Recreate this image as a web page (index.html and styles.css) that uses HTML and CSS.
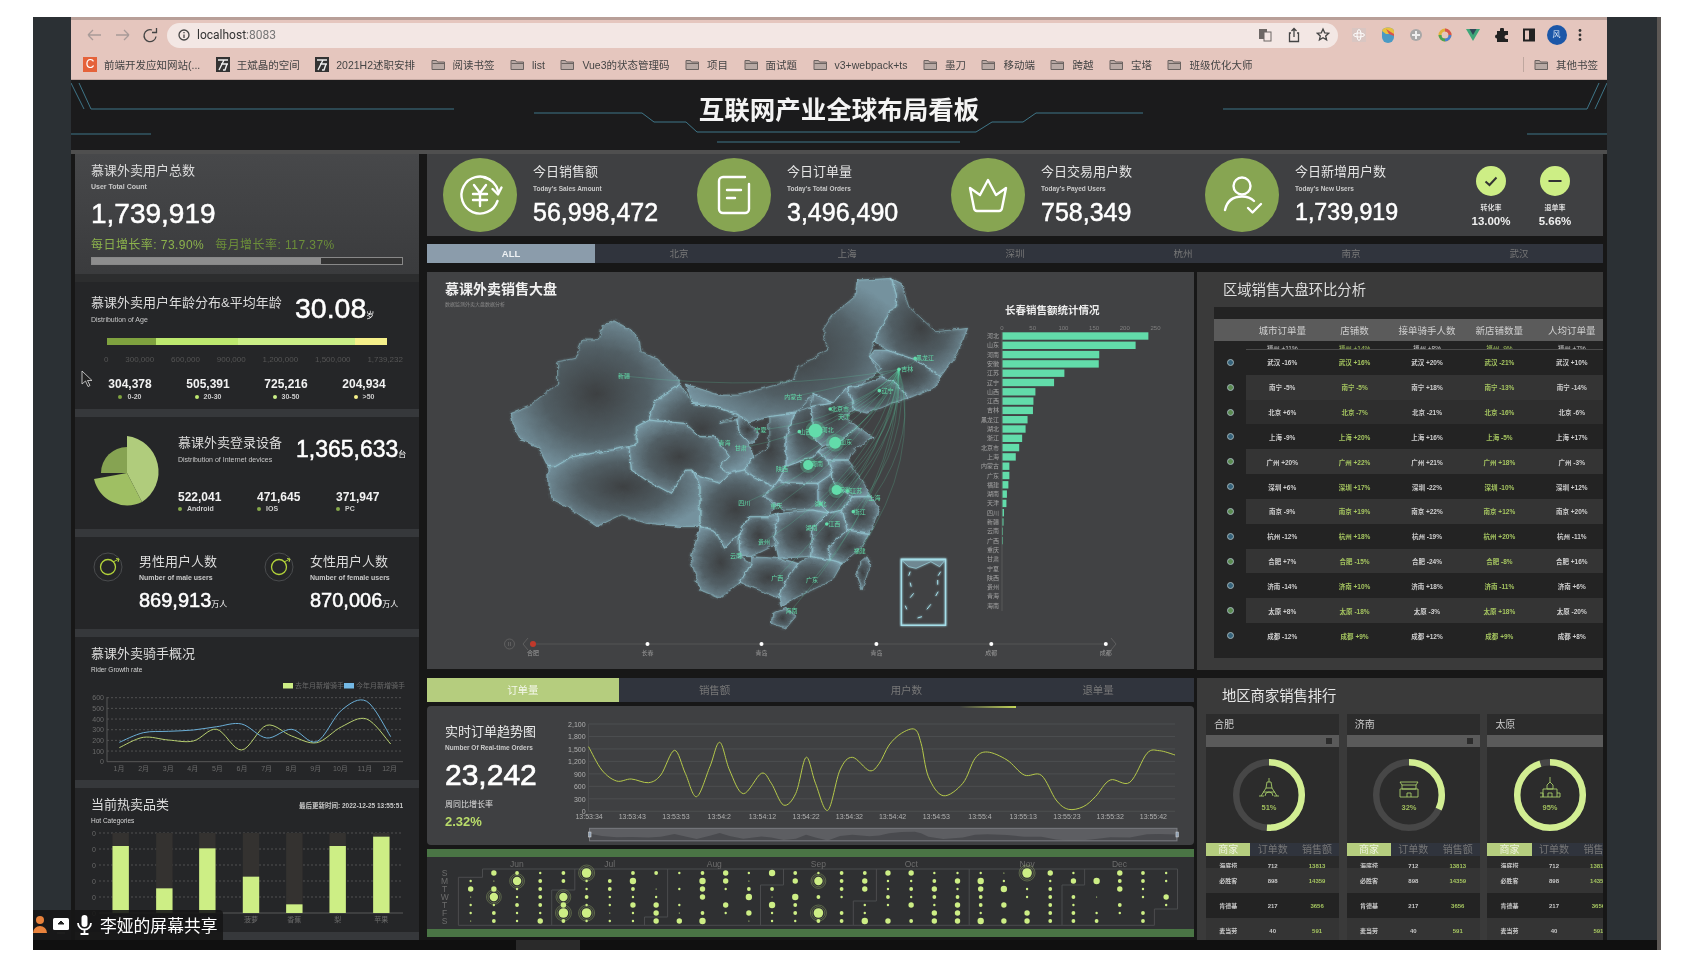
FILE: index.html
```html
<!DOCTYPE html>
<html lang="zh">
<head>
<meta charset="utf-8">
<title>互联网产业全球布局看板</title>
<link rel="stylesheet" href="styles.css">
</head>
<body>
<svg class="defs" width="0" height="0">
  <defs>
    <g id="folder"><path d="M1 3.500h4.500l1 1.500h7v7.500h-12.500z" fill="#b8a9a4" stroke="#6b6360"/><path d="M1.500 6.500h12" stroke="#6b6360"/></g>
    <radialGradient id="prov" cx=".5" cy=".5" r=".56"><stop offset="0" stop-color="#3d4042"/><stop offset=".55" stop-color="#515e64"/><stop offset="1" stop-color="#75929e"/></radialGradient>
    <filter id="rough" filterUnits="userSpaceOnUse" x="100" y="0" width="1100" height="1150" color-interpolation-filters="sRGB"><feTurbulence type="fractalNoise" baseFrequency=".05" numOctaves="3" seed="7" result="n"/><feDisplacementMap in="SourceGraphic" in2="n" scale="10" xChannelSelector="R" yChannelSelector="G"/></filter>
    <filter id="glow" x="-5%" y="-5%" width="110%" height="110%" color-interpolation-filters="sRGB"><feGaussianBlur stdDeviation="2.500" result="b"/><feMerge><feMergeNode in="b"/><feMergeNode in="SourceGraphic"/></feMerge></filter>
  </defs>
</svg>
<div class="frame">
  <div class="app">
    <header class="chrome">
      <div class="toolbar">
        <svg class="nav" width="86" height="24" viewBox="0 0 86 24"><path class="nav-dim" d="M5 12h13M5 12l5-5M5 12l5 5M33 12h13M46 12l-5-5M46 12l-5 5"/><path class="nav-on" d="M69 7a6 6 0 1 0 4 6.500M73.500 5v4.500h-4.500"/></svg>
        <div class="omni">
          <svg width="12" height="12" viewBox="0 0 12 12"><circle cx="6" cy="6" r="5" class="nav-on"/><path d="M6 5.500v3.500M6 3v1.200" class="nav-on"/></svg>
          <span class="url">localhost<em>:8083</em></span>
          <div class="omni-ico">
            <svg width="14" height="16" viewBox="0 0 14 16"><rect x="1" y="2" width="8" height="10" fill="#6d6765"/><rect x="6" y="5" width="7" height="9" fill="#f3e7e4" stroke="#6d6765"/></svg>
            <svg width="14" height="16" viewBox="0 0 14 16"><path class="nav-on" d="M4 6H2.500v8.500h9V6H10M7 10V1.500M4.500 4L7 1.500 9.500 4"/></svg>
            <svg width="14" height="16" viewBox="0 0 14 16"><path class="nav-on" d="M7 2l1.700 3.800 4 .4-3 2.700.9 4-3.600-2.100-3.600 2.100.9-4-3-2.700 4-.4z"/></svg>
          </div>
        </div>
        <div class="ext">
          <svg width="14" height="14" viewBox="0 0 14 14"><rect width="14" height="14" fill="#d9c6c2"/><ellipse cx="7" cy="7" rx="5.500" ry="2" fill="none" stroke="#fff"/><ellipse cx="7" cy="7" rx="2" ry="5.500" fill="none" stroke="#fff"/></svg>
          <svg width="14" height="16" viewBox="0 0 14 16"><path d="M1 4a6 3.500 0 0 1 12 0v6a6 6 0 0 1-12 0z" fill="#4a9ac4"/><path d="M1 4a6 3.500 0 0 1 12 0v3H5z" fill="#e8c23e"/><path d="M5 2l8 5v2l-5-2z" fill="#d9534f"/></svg>
          <svg width="14" height="14" viewBox="0 0 14 14"><circle cx="7" cy="7" r="6" fill="#a8a8a8"/><path d="M3 7h8M7 3v8" stroke="#eee" stroke-width="2"/></svg>
          <svg width="14" height="14" viewBox="0 0 14 14"><circle cx="7" cy="7" r="5" fill="none" stroke="#e2b33a" stroke-width="3"/><path d="M7 2a5 5 0 0 1 5 5" fill="none" stroke="#d9534f" stroke-width="3"/><path d="M7 12a5 5 0 0 1-5-5" fill="none" stroke="#4aa356" stroke-width="3"/><path d="M12 7a5 5 0 0 1-5 5" fill="none" stroke="#4a7fd1" stroke-width="3"/></svg>
          <svg width="14" height="14" viewBox="0 0 14 14"><path d="M0 1h14L7 13z" fill="#3fa77a"/><path d="M3.500 1h7L7 7z" fill="#2f4858"/></svg>
          <svg width="14" height="14" viewBox="0 0 14 14"><path d="M5 1.500a2 2 0 0 1 4 0V3h4v4h-1.500a2 2 0 0 0 0 4H13v3H2v-3.500a2 2 0 0 1 0-4V3h3z" fill="#222"/></svg>
          <svg width="12" height="14" viewBox="0 0 12 14"><rect x="1" y="1.500" width="10" height="11" fill="none" stroke="#222" stroke-width="2"/><rect x="6" y="2" width="4" height="10" fill="#222"/></svg>
          <span class="avatar">风</span>
          <svg width="4" height="14" viewBox="0 0 4 14"><circle cx="2" cy="2.500" r="1.400" fill="#333"/><circle cx="2" cy="7" r="1.400" fill="#333"/><circle cx="2" cy="11.500" r="1.400" fill="#333"/></svg>
        </div>
      </div>
      <nav class="marks">
        <span class="mark"><i class="c-ico">C</i>前端开发应知网站(...</span>
        <span class="mark"><svg width="14" height="15" viewBox="0 0 14 15"><rect width="14" height="15" fill="#333"/><path d="M2 3h10M8 3L3 13M5 7h7M11 7l-2 6H7" stroke="#eee" stroke-width="1.400" fill="none"/></svg>王斌晶的空间</span>
        <span class="mark"><svg width="14" height="15" viewBox="0 0 14 15"><rect width="14" height="15" fill="#333"/><path d="M2 3h10M8 3L3 13M5 7h7M11 7l-2 6H7" stroke="#eee" stroke-width="1.400" fill="none"/></svg>2021H2述职安排</span>
        <span class="mark"><svg width="15" height="15"><use href="#folder"/></svg>阅读书签</span>
        <span class="mark"><svg width="15" height="15"><use href="#folder"/></svg>list</span>
        <span class="mark"><svg width="15" height="15"><use href="#folder"/></svg>Vue3的状态管理码</span>
        <span class="mark"><svg width="15" height="15"><use href="#folder"/></svg>项目</span>
        <span class="mark"><svg width="15" height="15"><use href="#folder"/></svg>面试题</span>
        <span class="mark"><svg width="15" height="15"><use href="#folder"/></svg>v3+webpack+ts</span>
        <span class="mark"><svg width="15" height="15"><use href="#folder"/></svg>墨刀</span>
        <span class="mark"><svg width="15" height="15"><use href="#folder"/></svg>移动端</span>
        <span class="mark"><svg width="15" height="15"><use href="#folder"/></svg>跨越</span>
        <span class="mark"><svg width="15" height="15"><use href="#folder"/></svg>宝塔</span>
        <span class="mark"><svg width="15" height="15"><use href="#folder"/></svg>班级优化大师</span>
        <span class="mark mark-end"><svg width="15" height="15"><use href="#folder"/></svg>其他书签</span>
      </nav>
    </header>

    <div class="banner">
      <svg class="banner-lines" width="1536" height="70" viewBox="71 80 1536 70">
        <path d="M71 83L84 109M79 83L91 109H454M71 134H151M534 113H642L654 122H686L697 132H976L992 122H1023L1036 113H1143M717 142H960M1223 109H1587L1599 83M1595 109L1607 83M1527 134H1607"/>
      </svg>
      <h1>互联网产业全球布局看板</h1>
    </div>

    <main class="board">
      <aside class="left">
        <section class="panel p1">
          <h3>慕课外卖用户总数</h3>
          <p class="en">User Total Count</p>
          <div class="big">1,739,919</div>
          <div class="rates"><span>每日增长率: 73.90%</span><span class="dim">每月增长率: 117.37%</span></div>
          <div class="progress"><div class="progress-fill"></div></div>
        </section>
        <section class="panel p2">
          <div class="head">
            <div class="head-l"><h3>慕课外卖用户年龄分布&amp;平均年龄</h3><p class="en2">Distribution of Age</p></div>
            <div class="num28">30.08<small>岁</small></div>
          </div>
          <div class="agebar"><i class="a1"></i><i class="a2"></i><i class="a3"></i><i class="a4"></i></div>
          <div class="axis"><span>0</span><span>300,000</span><span>600,000</span><span>900,000</span><span>1,200,000</span><span>1,500,000</span><span>1,739,232</span></div>
          <div class="agestats">
            <div><b>304,378</b><p><i class="dot a1"></i>0-20</p></div>
            <div><b>505,391</b><p><i class="dot a2"></i>20-30</p></div>
            <div><b>725,216</b><p><i class="dot a3"></i>30-50</p></div>
            <div><b>204,934</b><p><i class="dot a4"></i>&gt;50</p></div>
          </div>
        </section>
        <section class="panel p3">
          <svg class="pie" width="103" height="112" viewBox="0 0 103 112">
            <path d="M52 19V56L67 85A36 36 0 0 0 52 19Z" fill="#b0cc7c"/>
            <path d="M52 56L67 85A34 34 0 0 1 19 62Z" fill="#9fbf63"/>
            <path d="M52 56V30A26 26 0 0 0 26 56Z" fill="#86a352"/>
          </svg>
          <div class="p3-body">
            <div class="head">
              <div class="head-d"><h3>慕课外卖登录设备</h3><p class="en2">Distribution of Internet devices</p></div>
              <div class="num23">1,365,633<small>台</small></div>
            </div>
            <div class="devstats">
              <div><b>522,041</b><p><i class="dot g"></i>Android</p></div>
              <div><b>471,645</b><p><i class="dot g"></i>IOS</p></div>
              <div><b>371,947</b><p><i class="dot g"></i>PC</p></div>
            </div>
          </div>
        </section>
        <section class="panel p4">
          <div class="gender">
            <svg class="ring" width="34" height="34" viewBox="0 0 34 34"><circle cx="17" cy="17" r="14" fill="none" stroke="#4a4c4e"/><circle cx="17" cy="17" r="7.500" fill="none" stroke="#b3d33a" stroke-width="1.300"/><path d="M22 12l6-3M25 8.500l3 .5-1 3" fill="none" stroke="#b3d33a"/></svg>
            <div><h3>男性用户人数</h3><p class="en3">Number of male users</p><div class="num20">869,913<small>万人</small></div></div>
          </div>
          <div class="gender">
            <svg class="ring" width="34" height="34" viewBox="0 0 34 34"><circle cx="17" cy="17" r="14" fill="none" stroke="#4a4c4e"/><circle cx="17" cy="17" r="7.500" fill="none" stroke="#b3d33a" stroke-width="1.300"/><path d="M22 12l6-3M25 8.500l3 .5-1 3" fill="none" stroke="#b3d33a"/></svg>
            <div><h3>女性用户人数</h3><p class="en3">Number of female users</p><div class="num20">870,006<small>万人</small></div></div>
          </div>
        </section>
        <section class="panel p5">
          <h3>慕课外卖骑手概况</h3>
          <p class="en3 thin">Rider Growth rate</p>
          <svg id="rider" class="flowsvg" width="344" height="103"></svg>
        </section>
        <section class="panel p6">
          <div class="title-row"><h3>当前热卖品类</h3><span class="updated">最后更新时间: 2022-12-25 13:55:51</span></div>
          <p class="en3 thin">Hot Categories</p>
          <svg id="hot" class="flowsvg" width="344" height="104"></svg>
        </section>
      </aside>

      <section class="stats">
        <div class="stat">
          <svg class="disc" width="74" height="74" viewBox="0 0 74 74"><path class="ico" d="M54.500 43A18.500 18.500 0 1 1 47 21.500M41 19.500A18 18 0 0 1 55 33M49.500 31L55 36.500L58.500 29.500M31 27L37 35L43 27M30 36H44M30 42H44M37 35V48"/></svg>
          <div class="stat-t"><h3>今日销售额</h3><p class="en">Today's Sales Amount</p><div class="num25">56,998,472</div></div>
        </div>
        <div class="stat">
          <svg class="disc" width="74" height="74" viewBox="0 0 74 74"><path class="ico" d="M48 19H26a4 4 0 0 0-4 4V51a4 4 0 0 0 4 4H48a4 4 0 0 0 4-4V26M30 32H44M30 40H38"/></svg>
          <div class="stat-t"><h3>今日订单量</h3><p class="en">Today's Total Orders</p><div class="num25">3,496,490</div></div>
        </div>
        <div class="stat">
          <svg class="disc" width="74" height="74" viewBox="0 0 74 74"><path class="ico" d="M19 30L29 37L37 22L45 37L55 30L51 50a3 3 0 0 1-3 3H26a3 3 0 0 1-3-3Z"/></svg>
          <div class="stat-t"><h3>今日交易用户数</h3><p class="en">Today's Payed Users</p><div class="num25">758,349</div></div>
        </div>
        <div class="stat">
          <svg class="disc" width="74" height="74" viewBox="0 0 74 74"><circle class="ico" cx="37" cy="28" r="8.500"/><path class="ico" d="M20 52C22 43 28 38.500 37 38.500C42 38.500 46 40 49 43M43 50L47.500 54.500L56 46"/></svg>
          <div class="stat-t"><h3>今日新增用户数</h3><p class="en">Today's New Users</p><div class="num25 fit">1,739,919</div></div>
        </div>
        <div class="rate">
          <svg width="30" height="30" viewBox="0 0 30 30"><circle cx="15" cy="15" r="15" fill="#cdee85"/><path d="M9.500 15.500L13.500 19L20.500 11.500" fill="none" stroke="#333" stroke-width="2"/></svg>
          <p>转化率</p><b>13.00%</b>
        </div>
        <div class="rate">
          <svg width="30" height="30" viewBox="0 0 30 30"><circle cx="15" cy="15" r="15" fill="#cdee85"/><path d="M8.500 15H21.500" stroke="#333" stroke-width="2"/></svg>
          <p>退单率</p><b>5.66%</b>
        </div>
      </section>

      <nav class="citytabs">
        <a class="on">ALL</a><a>北京</a><a>上海</a><a>深圳</a><a>杭州</a><a>南京</a><a>武汉</a>
      </nav>

      <section class="mapbox">
        <h2>慕课外卖销售大盘</h2>
        <p class="map-sub">数据监测外卖大盘数据分析</p>
        <svg id="map" class="mapsvg" width="767" height="398" viewBox="0 0 767 398">
          <svg x="-2" y="-2" width="770" height="410" viewBox="0 0 1568 1230" preserveAspectRatio="none">
            <defs>
              <g id="provinces">
                <polygon points="385,152 420,180 437,215 440,245 470,265 510,320 520,342 470,390 455,450 430,470 430,525 415,530 380,540 300,560 265,590 250,590 230,530 195,510 180,470 175,430 210,410 270,340 270,275 305,265 320,210 355,210 360,170"/>
                <polygon points="250,590 265,590 300,560 380,540 415,530 420,600 450,630 500,670 530,600 545,600 560,650 560,770 520,770 450,760 400,735 350,770 300,720 260,690 250,650"/>
                <polygon points="430,470 455,450 530,460 560,500 590,500 620,560 600,590 620,610 600,640 560,620 545,600 530,600 500,670 450,630 420,600 415,530 430,525"/>
                <polygon points="520,342 545,400 590,410 640,435 600,460 635,450 640,490 660,520 670,560 650,600 620,610 600,590 620,560 590,500 560,500 530,460 455,450 470,390"/>
                <polygon points="530,342 600,375 640,375 750,330 760,290 820,240 810,180 830,135 875,80 880,30 950,25 960,75 960,100 930,165 915,215 905,260 930,295 890,345 860,350 830,400 790,370 785,410 750,430 700,440 660,460 640,435 590,410 545,400"/>
                <polygon points="950,25 970,40 985,110 1040,185 1105,175 1085,250 1050,320 1000,270 940,240 915,215 930,165 960,100 960,75"/>
                <polygon points="915,240 940,240 1000,270 1050,320 1040,350 985,385 960,340 930,320 905,260"/>
                <polygon points="890,345 930,320 960,340 985,385 950,400 900,430 875,420 860,350"/>
                <polygon points="830,400 860,350 875,420 850,440 880,470 850,510 810,530 790,500 790,440 785,410"/>
                <polygon points="790,370 830,400 785,410 790,440 790,500 810,530 790,560 735,590 735,500 755,430"/>
                <polygon points="700,440 750,430 755,430 735,500 735,590 720,630 710,650 670,620 650,600 670,560 700,530"/>
                <polygon points="640,435 660,460 680,490 670,520 660,520 640,490 635,450"/>
                <polygon points="850,510 880,470 915,500 880,530 860,570 820,570 800,545"/>
                <polygon points="735,590 790,560 810,530 800,545 820,570 830,610 800,640 740,640 720,630"/>
                <polygon points="860,570 885,620 910,680 870,680 830,640 830,610 820,570"/>
                <polygon points="830,610 830,640 870,680 850,720 820,730 800,690 800,640"/>
                <polygon points="870,680 910,680 925,720 905,790 860,780 850,720"/>
                <polygon points="860,780 905,790 890,830 850,880 825,870 820,830"/>
                <polygon points="850,720 860,780 820,830 825,870 785,860 790,775 820,730"/>
                <polygon points="720,630 740,640 800,640 800,690 820,730 790,720 730,720 690,680 710,650"/>
                <polygon points="720,730 790,720 820,730 790,775 785,860 720,865 710,800"/>
                <polygon points="545,600 560,620 600,640 620,610 650,600 670,620 710,650 690,680 720,700 700,740 660,740 640,790 610,835 590,780 560,770 560,650"/>
                <polygon points="660,740 700,740 720,730 710,800 720,820 665,860 640,860 640,790"/>
                <polygon points="560,770 590,780 610,835 640,790 640,860 665,880 640,940 600,985 560,960 540,870"/>
                <polygon points="665,860 720,865 760,880 735,930 720,985 680,960 640,940 665,880"/>
                <polygon points="760,880 785,860 825,870 850,880 830,930 760,980 725,1010 720,985 735,930"/>
                <polygon points="735,1015 755,1040 735,1075 705,1060 708,1030"/>
                <polygon points="900,860 908,880 890,960 878,920 885,880"/>
              </g>
            </defs>
            <g filter="url(#rough)">
              <use href="#provinces" class="prov-fill"/>
              <use href="#provinces" class="prov-line" filter="url(#glow)"/>
            </g>
            <g class="inset" filter="url(#glow)">
              <rect x="970" y="868" width="90" height="198"/>
              <path d="M972 872H1058L1048 890L1030 875L1000 895L985 890Z" class="inset-land"/>
              <path d="M988 905L985 917M1050 905L1045 917M988 938L990 950M1044 930V944M995 970L988 983M1045 965L1040 978M978 1007L981 1018M1030 1003L1022 1018M1012 1040L1003 1044"/>
            </g>
          </svg>
          <g id="routes"></g>
          <g id="maplabels"></g>
          <g id="salesbars"></g>
          <g class="timeline">
            <path class="tl-line" d="M106 372H679"/>
            <circle class="tl-play" cx="82.500" cy="372" r="5"/>
            <path class="tl-play" d="M81.500 370V374M83.500 370V374M101 366L96 372L101 378M684 366L689 372L684 378"/>
            <circle class="tl-now" cx="106" cy="372" r="3"/>
            <circle class="tl-dot" cx="220.500" cy="372" r="2"/><circle class="tl-dot" cx="334.500" cy="372" r="2"/><circle class="tl-dot" cx="449.400" cy="372" r="2"/><circle class="tl-dot" cx="564.300" cy="372" r="2"/><circle class="tl-dot" cx="678.800" cy="372" r="2"/>
            <text x="106" y="383">合肥</text><text x="220.500" y="383">长春</text><text x="334.500" y="383">青岛</text><text x="449.400" y="383">青岛</text><text x="564.300" y="383">成都</text><text x="678.800" y="383">成都</text>
          </g>
        </svg>
      </section>

      <section class="region">
        <h2>区域销售大盘环比分析</h2>
        <div class="tbl">
          <div class="tbl-head"><span></span><span>城市订单量</span><span>店铺数</span><span>接单骑手人数</span><span>新店铺数量</span><span>人均订单量</span></div>
          <div class="tbl-cut"><i></i><span>福州 +11%</span><span class="gr">福州 +14%</span><span>福州 +8%</span><span class="gr">福州 -9%</span><span>福州 +7%</span></div>
          <div class="tr"><i class="dt b"></i><span>武汉 -16%</span><span class="gr">武汉 +16%</span><span>武汉 +20%</span><span class="gr">武汉 -21%</span><span>武汉 +10%</span></div>
          <div class="tr alt"><i class="dt g"></i><span>南宁 -5%</span><span class="gr">南宁 -5%</span><span>南宁 +18%</span><span class="gr">南宁 -13%</span><span>南宁 -14%</span></div>
          <div class="tr mid"><i class="dt g"></i><span>北京 +6%</span><span class="gr">北京 -7%</span><span>北京 -21%</span><span class="gr">北京 -16%</span><span>北京 -6%</span></div>
          <div class="tr"><i class="dt b"></i><span>上海 -9%</span><span class="gr">上海 +20%</span><span>上海 +16%</span><span class="gr">上海 -5%</span><span>上海 +17%</span></div>
          <div class="tr alt"><i class="dt g"></i><span>广州 +20%</span><span class="gr">广州 +22%</span><span>广州 +21%</span><span class="gr">广州 +18%</span><span>广州 -3%</span></div>
          <div class="tr"><i class="dt b"></i><span>深圳 +6%</span><span class="gr">深圳 +17%</span><span>深圳 -22%</span><span class="gr">深圳 -10%</span><span>深圳 +12%</span></div>
          <div class="tr alt"><i class="dt g"></i><span>南京 -9%</span><span class="gr">南京 +19%</span><span>南京 +22%</span><span class="gr">南京 +12%</span><span>南京 +20%</span></div>
          <div class="tr"><i class="dt b"></i><span>杭州 -12%</span><span class="gr">杭州 +18%</span><span>杭州 -19%</span><span class="gr">杭州 +20%</span><span>杭州 -11%</span></div>
          <div class="tr alt"><i class="dt g"></i><span>合肥 +7%</span><span class="gr">合肥 -15%</span><span>合肥 -24%</span><span class="gr">合肥 -8%</span><span>合肥 +16%</span></div>
          <div class="tr"><i class="dt b"></i><span>济南 -14%</span><span class="gr">济南 +10%</span><span>济南 +18%</span><span class="gr">济南 -11%</span><span>济南 +6%</span></div>
          <div class="tr alt"><i class="dt g"></i><span>太原 +8%</span><span class="gr">太原 -18%</span><span>太原 -3%</span><span class="gr">太原 +18%</span><span>太原 -20%</span></div>
          <div class="tr"><i class="dt b"></i><span>成都 -12%</span><span class="gr">成都 +9%</span><span>成都 +12%</span><span class="gr">成都 +9%</span><span>成都 +8%</span></div>
        </div>
      </section>

      <section class="centerlow">
        <nav class="metrictabs"><a class="on">订单量</a><a>销售额</a><a>用户数</a><a>退单量</a></nav>
        <div class="trend">
          <div class="trend-t">
            <h3>实时订单趋势图</h3>
            <p class="en3">Number Of Real-time Orders</p>
            <div class="num30">23,242</div>
            <p class="wk">周同比增长率</p>
            <div class="wkv">2.32%</div>
          </div>
          <svg id="trend" width="637" height="139"></svg>
          <i class="trend-mark"></i>
        </div>
        <div class="heat">
          <svg id="heat" width="767" height="72"></svg>
        </div>
      </section>

      <section class="rank">
        <h2>地区商家销售排行</h2>
        <div class="cards">
          <article class="card">
            <h4>合肥</h4><div class="card-bar"><i></i></div>
            <div class="card-ring"><svg width="80" height="80" viewBox="0 0 80 80"><circle class="rg-bg" cx="40" cy="40" r="32.800"/><circle class="rg-on" cx="40" cy="40" r="32.800" stroke-dasharray="105 206"/><path class="rg-ico" d="M40 23V27M38 27H42L43 33H37ZM37 33L32 41M43 33L48 41M34 37H46M30 41H35M45 41H50M36 41a4 4 0 0 1 8 0"/><text x="40" y="55">51%</text></svg></div>
            <div class="card-tabs"><a class="on">商家</a><a>订单数</a><a>销售额</a></div>
            <div class="cr r0"><span>海底捞</span><span>712</span><span class="gr">13813</span></div>
            <div class="cr r1"><span>必胜客</span><span>898</span><span class="gr">14359</span></div>
            <div class="cr r2"><span>肯德基</span><span>217</span><span class="gr">3656</span></div>
            <div class="cr r1"><span>麦当劳</span><span>40</span><span class="gr">591</span></div>
          </article>
          <article class="card">
            <h4>济南</h4><div class="card-bar"><i></i></div>
            <div class="card-ring"><svg width="80" height="80" viewBox="0 0 80 80"><circle class="rg-bg" cx="40" cy="40" r="32.800"/><circle class="rg-on" cx="40" cy="40" r="32.800" stroke-dasharray="66 206"/><path class="rg-ico" d="M31 27H49L47 30H33ZM33 30V34H47V30M31 34H49V42H31ZM38 42V38H42V42"/><text x="40" y="55">32%</text></svg></div>
            <div class="card-tabs"><a class="on">商家</a><a>订单数</a><a>销售额</a></div>
            <div class="cr r0"><span>海底捞</span><span>712</span><span class="gr">13813</span></div>
            <div class="cr r1"><span>必胜客</span><span>898</span><span class="gr">14359</span></div>
            <div class="cr r2"><span>肯德基</span><span>217</span><span class="gr">3656</span></div>
            <div class="cr r1"><span>麦当劳</span><span>40</span><span class="gr">591</span></div>
          </article>
          <article class="card">
            <h4>太原</h4><div class="card-bar"><i></i></div>
            <div class="card-ring"><svg width="80" height="80" viewBox="0 0 80 80"><circle class="rg-bg" cx="40" cy="40" r="32.800"/><circle class="rg-on" cx="40" cy="40" r="32.800" stroke-dasharray="196 206"/><path class="rg-ico" d="M40 22V27M37 30L40 27L43 30V34H37ZM33 34H47V42H33ZM30 38H33V42H30M47 38H50V42H47M38 42V38H42V42"/><text x="40" y="55">95%</text></svg></div>
            <div class="card-tabs"><a class="on">商家</a><a>订单数</a><a>销售额</a></div>
            <div class="cr r0"><span>海底捞</span><span>712</span><span class="gr">13813</span></div>
            <div class="cr r1"><span>必胜客</span><span>898</span><span class="gr">14359</span></div>
            <div class="cr r2"><span>肯德基</span><span>217</span><span class="gr">3656</span></div>
            <div class="cr r1"><span>麦当劳</span><span>40</span><span class="gr">591</span></div>
          </article>
        </div>
      </section>
    </main>
  </div>
  <div class="scrollbar"><i></i></div>
  <svg class="cursor" width="12" height="18" viewBox="0 0 12 18"><path d="M1 1V14L4.500 11L7 16.500L9 15.500L6.500 10.500H11Z" fill="#222" stroke="#ddd" stroke-width=".8"/></svg>
  <div class="share">
    <svg width="59" height="24" viewBox="0 0 59 24"><circle cx="7" cy="7" r="4" fill="#e8823c"/><path d="M0 20a7 7 0 0 1 14 0z" fill="#e8823c"/><rect x="20" y="5" width="16" height="12" rx="1.500" fill="#fff"/><path d="M24 20H32M28 8L25 11H31Z" stroke="#222" fill="#222"/><rect x="48.500" y="2" width="6" height="12" rx="3" fill="#fff"/><path d="M45 10a6.500 6.500 0 0 0 13 0M51.500 16.500V21M47.500 21H55.500" fill="none" stroke="#fff" stroke-width="1.800"/></svg>
    <span>李娅的屏幕共享</span>
  </div>
</div>
<script src="app.js"></script>
</body>
</html>
```
FILE: styles.css
```css
* { box-sizing: border-box; }
html, body { margin: 0; background: #fff; }
body { font-family: "Liberation Sans", "Noto Sans CJK SC", sans-serif; color: #ddd; overflow: hidden; height: 962px; }
h1, h2, h3, h4, p { margin: 0; font-weight: 400; }
i, em { font-style: normal; }
.defs { position: absolute; }

.frame { position: relative; width: 1628px; height: 933px; margin: 17px 0 0 33px; padding-left: 38px; background: #2b3034; border-right: 4px solid #5d5855; overflow: hidden; filter: blur(.55px); }
.app { width: 1536px; height: 923px; background: #161616; display: flex; flex-direction: column; overflow: hidden; }
.scrollbar { width: 1628px; height: 10px; margin-left: -38px; background: #101010; }
.scrollbar i { display: block; width: 64px; height: 10px; margin-left: 483px; background: #2a2a2a; }
.cursor { position: absolute; left: 48px; top: 353px; }
.share { position: absolute; left: 0; top: 893px; width: 190px; height: 30px; display: flex; align-items: center; background: rgba(22, 22, 22, .9); border-radius: 0 4px 0 0; }
.share span { margin-left: 8px; font-size: 16.800px; color: #fff; }

/* browser chrome */
.chrome { height: 63px; flex: none; background: #e5c6be; border-top: 3px solid #b89f98; border-bottom: 1px solid #c5aaa3; color: #444; }
.toolbar { height: 30px; display: flex; align-items: center; }
.nav { margin-left: 12px; }
.nav-dim { fill: none; stroke: #a89b98; stroke-width: 1.300; }
.nav-on { fill: none; stroke: #444; stroke-width: 1.300; }
.omni { width: 1171px; height: 25px; margin-left: -2px; border-radius: 13px; background: #f3e7e4; display: flex; align-items: center; padding: 0 8px 0 11px; gap: 7px; }
.url { font-size: 12px; color: #333; font-family: Roboto, "Liberation Sans", sans-serif; }
.url em { color: #777; }
.omni-ico { margin-left: auto; display: flex; gap: 15px; align-items: center; }
.ext { margin-left: 14px; display: flex; align-items: center; gap: 14.500px; }
.avatar { width: 20px; height: 20px; margin: 0 -3px; border-radius: 50%; background: #1c57a8; color: #dfe8f5; font-size: 8px; line-height: 20px; text-align: center; }
.marks { height: 29px; display: flex; align-items: center; gap: 15.500px; padding-left: 12px; font-size: 10.500px; white-space: nowrap; }
.mark { display: flex; align-items: center; gap: 7px; }
.mark-end { margin-left: auto; margin-right: 9px; padding-left: 10px; border-left: 1px solid #bfa79f; }
.c-ico { width: 14px; height: 15px; background: #e5623a; color: #fff; font-size: 12px; line-height: 15px; text-align: center; }

/* banner */
.banner { position: relative; height: 70px; flex: none; background: #1b1b1c; padding-bottom: 11px; display: flex; align-items: center; justify-content: center; }
.banner h1 { position: relative; font-size: 25.500px; line-height: 30px; font-weight: 700; color: #f4f4f4; }
.banner-lines { position: absolute; left: 0; top: 0; }
.banner-lines path { fill: none; stroke: #3f7688; stroke-width: 1; }

/* board */
.board { flex: 1; display: grid; grid-template-columns: 352px 767px 409px; grid-template-rows: 82px 20px 398px 262px; gap: 8px 0; padding: 0 4px; border-top: 4px solid #4f4f4f; background: #171717; }
.left { grid-row: 1 / -1; grid-column: 1; width: 344px; display: flex; flex-direction: column; gap: 8px; background: #36383b; height: 786px; }
.panel { flex: none; background: #252628; padding: 0 16px; overflow: hidden; }
.panel h3 { font-size: 13px; line-height: 18px; color: #dcdcdc; }
.en { font-size: 7px; line-height: 14px; font-weight: 700; color: #c9c9c9; }
.en2 { font-size: 7px; line-height: 16px; color: #c9c9c9; }
.en3 { font-size: 7px; line-height: 14px; font-weight: 700; color: #c9c9c9; }
.thin { font-size: 6.500px; font-weight: 400; color: #d6d6d6; }
small { font-size: 8px; font-weight: 400; -webkit-text-stroke: 0; }

.p1 { height: 120px; padding-top: 8px; background: linear-gradient(#47484a, #3a3b3d); box-shadow: 0 8px 0 #2c2d2e; }
.big { font-size: 28px; line-height: 40px; color: #fff; -webkit-text-stroke: .5px #fff; }
.rates { display: flex; gap: 11px; font-size: 12px; line-height: 22px; color: #8cb24c; letter-spacing: .45px; white-space: nowrap; }
.dim { color: #6c8e3a; }
.progress { height: 8px; margin-top: 1px; border: 1px solid #888; background: #333; }
.progress-fill { height: 100%; width: 74%; background: #8d8d8d; }

.p2 { height: 127px; padding-top: 12px; }
.head { display: flex; }
.head-l { width: 204px; white-space: nowrap; }
.head-d { width: 118px; white-space: nowrap; }
.num28 { font-size: 28.500px; line-height: 28px; color: #fff; -webkit-text-stroke: .5px #fff; white-space: nowrap; }
.num23 { font-size: 23px; line-height: 30px; color: #fff; -webkit-text-stroke: .5px #fff; white-space: nowrap; }
.num20 { font-size: 20px; line-height: 30px; color: #fff; -webkit-text-stroke: .5px #fff; white-space: nowrap; }
.num25 { font-size: 25px; line-height: 32px; color: #fff; -webkit-text-stroke: .5px #fff; white-space: nowrap; }
.num25.fit { font-size: 23.200px; }
.num30 { font-size: 30px; line-height: 40px; color: #fff; -webkit-text-stroke: .7px #fff; }
.agebar { display: flex; height: 7px; margin: 8px 0 0 16px; width: 280px; }
.agebar i:nth-child(1) { width: 49px; }
.agebar i:nth-child(2) { width: 82px; }
.agebar i:nth-child(3) { width: 117px; }
.agebar i:nth-child(4) { width: 32px; }
.a1 { background: #7fa23f; }
.a2 { background: #bde86f; }
.a3 { background: #cbef87; }
.a4 { background: #f5f08a; }
.g { background: #86a84a; }
.axis { display: flex; justify-content: space-between; margin: 8px 0 0 13px; font-size: 8px; line-height: 14px; color: #555; white-space: nowrap; }
.agestats { display: grid; grid-template-columns: repeat(4, 78px); margin-top: 10px; text-align: center; }
.agestats b, .devstats b { display: block; font-size: 12px; line-height: 14px; color: #f2f2f2; }
.agestats p, .devstats p { font-size: 7px; line-height: 12px; font-weight: 700; color: #ccc; display: flex; align-items: center; justify-content: center; gap: 5px; }
.dot { width: 4px; height: 4px; border-radius: 50%; flex: none; }

.p3 { height: 112px; padding: 0; display: flex; }
.pie { flex: none; }
.p3-body { padding-top: 17px; flex: 1; }
.devstats { display: grid; grid-template-columns: repeat(3, 79px); margin-top: 20px; }
.devstats p { justify-content: flex-start; line-height: 10px; }

.p4 { height: 92px; padding: 16px 0 0 0; display: grid; grid-template-columns: 171px 173px; }
.gender { display: flex; gap: 14px; padding-left: 16px; }
.ring { margin-top: -3px; flex: none; }

.p5 { height: 143px; padding-top: 8px; }
.flowsvg { display: block; margin-left: -16px; }
.p6 { height: 144px; padding-top: 8px; }
.title-row { display: flex; justify-content: space-between; align-items: center; }
.updated { font-size: 6.500px; font-weight: 700; color: #c8c8c8; }

.ax { font-size: 7px; fill: #6a6a6a; }
.ax-l { text-anchor: end; }
.ax-c { text-anchor: middle; }
.grid-d { stroke: #5c5c5c; stroke-dasharray: 2 2; stroke-width: .8; }
.ax-line { stroke: #585858; stroke-width: 1; fill: none; }
.cv-g { fill: none; stroke: #b7cf6f; stroke-width: 1; }
.cv-b { fill: none; stroke: #6aaed6; stroke-width: 1; }
.sw-g { fill: #cdee85; }
.sw-b { fill: #74b9e6; }
.hotbg { fill: #343230; }
.hotfg { fill: #cdee85; }

/* stats */
.stats { grid-column: 2 / 4; grid-row: 1; background: #3f4042; display: flex; padding-left: 16px; }
.stat { width: 254px; flex: none; display: flex; gap: 16px; }
.disc { flex: none; margin-top: 4px; background: #87a552; border-radius: 50%; }
.ico { fill: none; stroke: #fff; stroke-width: 2.400; stroke-linecap: round; stroke-linejoin: round; }
.stat-t { padding-top: 9px; }
.stat-t h3 { font-size: 13px; line-height: 18px; color: #e4e4e4; }
.stat-t .en { font-size: 6.500px; line-height: 15px; }
.rate { width: 64px; flex: none; padding-top: 12px; text-align: center; }
.rate svg { display: block; margin: 0 auto; }
.rate p { margin-top: 6px; font-size: 7px; line-height: 12px; font-weight: 700; color: #ddd; }
.rate b { display: block; font-size: 11.500px; line-height: 14px; color: #eee; }

.citytabs { grid-column: 2 / 4; grid-row: 2; height: 19px; display: grid; grid-template-columns: repeat(7, 168px); background: #30343d; }
.citytabs a, .metrictabs a { text-align: center; color: #777; }
.citytabs a { font-size: 9.500px; line-height: 19px; }
.citytabs .on { background: #8b9cab; color: #eef1f4; font-weight: 700; }

/* map */
.mapbox { grid-column: 2; grid-row: 3; position: relative; height: 397px; background: #414244; padding: 8px 18px; overflow: hidden; }
.mapbox h2 { position: relative; font-size: 14px; line-height: 18px; font-weight: 700; color: #f0f0f0; }
.map-sub { position: relative; font-size: 5px; line-height: 12px; color: #8a8a8a; }
.mapsvg { position: absolute; left: 0; top: 0; }
.prov-fill { fill: url(#prov); }
.prov-line { fill: none; stroke: #9fd8e3; stroke-width: 1; stroke-linejoin: round; }
.prov-line polygon, .inset rect, .inset path { vector-effect: non-scaling-stroke; }
.inset rect { fill: none; stroke: #a5dfea; stroke-width: 1.500; }
.inset path { fill: none; stroke: #a5dfea; stroke-width: 1; }
.inset .inset-land { fill: #6f8892; stroke-width: .6; }
.route { fill: none; stroke: #5fe0b0; stroke-width: .5; opacity: .4; }
.mlabel { font-size: 6px; fill: #62dcaa; text-anchor: middle; }
.mdot { fill: #62dcaa; }
.mhalo { fill: #62dcaa; opacity: .28; }
.bar-title { font-size: 10.500px; font-weight: 700; fill: #ececec; }
.bar-ax { font-size: 6px; fill: #808080; text-anchor: middle; }
.bar-lb { font-size: 6px; fill: #a5a5a5; text-anchor: end; }
.bar-fg { fill: #62dcaa; }
.tl-line { stroke: #555; fill: none; }
.tl-play { fill: none; stroke: #666; stroke-width: .8; }
.tl-now { fill: #c0392b; }
.tl-dot { fill: #fff; }
.timeline text { font-size: 6px; fill: #999; text-anchor: middle; }

/* region table */
.region { grid-column: 3; grid-row: 3; margin-left: 3px; background: #3a3a3a; padding: 7px 0 12px 17px; overflow: hidden; }
.region h2 { font-size: 14.300px; line-height: 22px; color: #dedede; padding-left: 9px; }
.tbl { height: 351px; margin-top: 6px; padding-top: 12px; background: #232323; overflow: hidden; }
.tbl-head, .tbl-cut, .tr { display: grid; grid-template-columns: 32px repeat(5, 72.400px); text-align: center; white-space: nowrap; align-items: center; }
.tbl-head { height: 22px; background: #5b5b5b; font-size: 9.500px; color: #cfcfcf; }
.tbl-cut { height: 9px; overflow: hidden; font-size: 6.500px; line-height: 16px; align-items: start; color: #ccc; position: relative; }
.tbl-cut::after { content: ""; position: absolute; left: 32px; right: 0; bottom: 0; height: 1px; background: #4a4a4a; }
.tr { height: 24.830px; font-size: 6.500px; font-weight: 700; color: #cfcfcf; background: linear-gradient(90deg, #232323 32px, transparent 32px); }
.alt { background: linear-gradient(90deg, #232323 32px, #343434 32px); }
.mid { background: linear-gradient(90deg, #232323 32px, #2e2e2e 32px); }
.gr { color: #a5c560; }
.dt { width: 7px; height: 7px; border-radius: 50%; margin-left: 12.500px; border: 1px solid #9fb3b8; }
.dt.b { background: #35627a; }
.dt.g { background: #5a8a50; }

/* center lower */
.centerlow { grid-column: 2; grid-row: 4; display: flex; flex-direction: column; gap: 4px; }
.metrictabs { height: 24px; flex: none; display: grid; grid-template-columns: repeat(4, 1fr); background: #30343d; }
.metrictabs a { font-size: 10.500px; line-height: 24px; }
.metrictabs .on { background: #b5cd7e; color: #f4f7ea; }
.trend { position: relative; height: 139px; flex: none; background: #3f4042; border-radius: 4px; display: flex; }
.trend-t { width: 130px; flex: none; padding: 17px 0 0 18px; }
.trend-t h3 { font-size: 13px; line-height: 18px; color: #e8e8e8; }
.trend-t .en3 { font-size: 6.500px; line-height: 14px; white-space: nowrap; }
.wk { font-size: 8px; line-height: 12px; margin-top: 4px; color: #ddd; }
.wkv { font-size: 13px; line-height: 18px; font-weight: 700; color: #b9dc6a; margin-top: 2px; }
.trend-mark { position: absolute; left: 533px; top: 0; width: 56px; height: 1.500px; background: linear-gradient(90deg, #3f4042, #c4d65a); }
.trend-ln { fill: none; stroke: #b5c94a; stroke-width: 1; }
.trend-g { stroke: #4d4e50; stroke-width: 1; }
.trend-ax { font-size: 7px; fill: #b0b0b0; }
.sl-bg { fill: #5d5e62; }
.sl-sh { fill: #494a4e; }
.sl-h { fill: #8d9fb3; stroke: #ddd; stroke-width: .5; }
.sl-f { fill: none; stroke: #7a7b80; stroke-width: 1; }
.heat { height: 88px; flex: none; background: #2f3032; border-top: 8px solid #4a7545; border-bottom: 8px solid #4a7545; }
.heat svg { display: block; }
.h-line { fill: none; stroke: #4b4c4e; stroke-width: 1; }
.h-t { font-size: 8.500px; fill: #6c6c6c; text-anchor: middle; }
.h-dot { fill: #cdee85; }
.h-halo { fill: none; stroke: #cdee85; stroke-width: .5; opacity: .55; }

/* rank */
.rank { grid-column: 3; grid-row: 4; margin-left: 3px; background: #3a3a3a; overflow: hidden; padding: 7px 0 0 9px; }
.rank h2 { font-size: 14.300px; line-height: 22px; color: #e6e6e6; padding-left: 16px; }
.cards { display: flex; gap: 7.400px; margin-top: 7px; overflow: hidden; }
.card { flex: none; width: 133.300px; background: #2c2c2c; }
.card h4 { height: 21px; font-size: 10px; line-height: 21px; padding-left: 8px; color: #ccc; }
.card-bar { height: 12px; background: #5a5a5a; display: flex; justify-content: flex-end; align-items: center; padding-right: 7px; }
.card-bar i { width: 6px; height: 6px; background: #2c2c2c; }
.card-ring { height: 96px; padding: 8px 0 0 22.500px; }
.card-ring svg { display: block; }
.rg-bg { fill: none; stroke: #474747; stroke-width: 6.500; }
.rg-on { fill: none; stroke: #d2ee92; stroke-width: 6.500; transform: rotate(-90deg); transform-origin: 40px 40px; }
.rg-ico { fill: none; stroke: #a6cc6a; stroke-width: .9; }
.card-ring text { font-size: 7.500px; font-weight: 700; fill: #9fbc5d; text-anchor: middle; }
.card-tabs { display: grid; grid-template-columns: repeat(3, 1fr); height: 13px; background: #30343d; text-align: center; font-size: 10px; line-height: 13px; color: #777; }
.card-tabs .on { background: #b5cd7e; color: #eef3df; }
.cr { display: grid; grid-template-columns: repeat(3, 1fr); height: 25px; align-items: center; text-align: center; font-size: 6px; font-weight: 700; color: #c8c8c8; }
.r0 { height: 12px; background: #2a2a2a; overflow: hidden; line-height: 20px; align-items: start; }
.r1 { background: #343434; }
.r2 { background: #232323; }
```
FILE: app.js
```js
const NS = 'http://www.w3.org/2000/svg';

function add(parent, tag, attrs, text) {
  const el = document.createElementNS(NS, tag);
  for (const key in attrs) el.setAttribute(key, attrs[key]);
  if (text != null) el.textContent = text;
  parent.appendChild(el);
  return el;
}

function smooth(points) {
  let d = 'M' + points[0].join(',');
  for (let i = 0; i < points.length - 1; i++) {
    const p0 = points[i - 1] || points[i];
    const p1 = points[i];
    const p2 = points[i + 1];
    const p3 = points[i + 2] || p2;
    const c1 = [p1[0] + (p2[0] - p0[0]) / 6, p1[1] + (p2[1] - p0[1]) / 6];
    const c2 = [p2[0] - (p3[0] - p1[0]) / 6, p2[1] - (p3[1] - p1[1]) / 6];
    d += 'C' + [c1, c2, p2].map(p => p.map(n => n.toFixed(1)).join(',')).join(' ');
  }
  return d;
}

/* Rider chart */
(function () {
  const svg = document.getElementById('rider');
  const cols = ['1月', '2月', '3月', '4月', '5月', '6月', '7月', '8月', '9月', '10月', '11月', '12月'];
  ['600', '500', '400', '300', '200', '100'].forEach((label, i) => {
    const y = 20.7 + i * 10.67;
    add(svg, 'line', { x1: 32, x2: 328, y1: y, y2: y, class: 'grid-d' });
    add(svg, 'text', { x: 29, y: y + 2.5, class: 'ax ax-l' }, label);
  });
  add(svg, 'text', { x: 29, y: 87.2, class: 'ax ax-l' }, '0');
  add(svg, 'path', { d: 'M32 20V84.700H328', class: 'ax-line' });
  cols.forEach((label, i) => add(svg, 'text', { x: 44 + i * 24.6, y: 94, class: 'ax ax-c' }, label));
  const toPx = p => [p[0] / 3 - 15, p[1] / 3 - 137];
  const green = [[178, 623], [250, 592], [325, 600], [400, 603], [470, 568], [545, 630], [620, 556], [695, 588], [770, 608], [845, 560], [920, 537], [992, 612]];
  const blue = [[178, 607], [250, 578], [325, 574], [400, 570], [470, 560], [545, 552], [620, 594], [695, 568], [770, 605], [845, 510], [920, 484], [992, 590]];
  add(svg, 'path', { d: smooth(green.map(toPx)), class: 'cv-g' });
  add(svg, 'path', { d: smooth(blue.map(toPx)), class: 'cv-b' });
  add(svg, 'rect', { x: 208, y: 6, width: 10, height: 5.500, class: 'sw-g' });
  add(svg, 'text', { x: 220, y: 11, class: 'ax' }, '去年月新增骑手');
  add(svg, 'rect', { x: 269, y: 6, width: 10, height: 5.500, class: 'sw-b' });
  add(svg, 'text', { x: 281, y: 11, class: 'ax' }, '今年月新增骑手');
})();

/* Hot categories */
(function () {
  const svg = document.getElementById('hot');
  for (let i = 0; i < 6; i++) {
    const y = 5 + i * 16;
    add(svg, 'line', { x1: 24, x2: 328, y1: y, y2: y, class: i === 5 ? 'ax-line' : 'grid-d' });
    add(svg, 'text', { x: 21, y: y + 2.5, class: 'ax ax-l' }, '0');
  }
  const items = [['芒果', 182, 918], ['桃子', 313, 1045], ['橙子', 442, 925], ['菠萝', 573, 1010], ['香蕉', 703, 1093], ['梨', 833, 918], ['苹果', 964, 890]];
  items.forEach(([name, cx, top]) => {
    const x = cx / 3 - 15;
    const y = top / 3 - 288;
    add(svg, 'rect', { x: x - 8.2, y: 5, width: 16.4, height: 80, class: 'hotbg' });
    add(svg, 'rect', { x: x - 8.2, y: y, width: 16.4, height: 85 - y, class: 'hotfg' });
    add(svg, 'text', { x: x, y: 94, class: 'ax ax-c' }, name);
  });
})();

/* Map overlay: labels, routes, sales bars */
(function () {
  const X = z => z / 2.036 - 2;
  const Y = z => z / 3 - 2;
  const routes = document.getElementById('routes');
  const from = [965, 298];
  const targets = [[795, 482], [835, 518], [780, 585], [838, 660], [860, 660], [913, 683], [875, 725], [885, 842], [820, 762], [805, 700], [785, 775], [745, 1022], [790, 930], [715, 925], [690, 815], [715, 710], [650, 700], [725, 597], [640, 535], [685, 480], [405, 318], [750, 380], [835, 418], [855, 442], [925, 360], [1000, 265]];
  targets.forEach(t => {
    const mx = (from[0] + t[0]) / 2 + 20 + (t[1] - from[1]) * 0.12;
    const my = (from[1] + t[1]) / 2 + (t[0] < 700 ? 60 : 0);
    add(routes, 'path', { d: `M${X(from[0])} ${Y(from[1])}Q${X(mx)} ${Y(my)} ${X(t[0])} ${Y(t[1])}`, class: 'route' });
  });
  const labels = document.getElementById('maplabels');
  const places = [[405, 318, '新疆'], [750, 380, '内蒙古'], [845, 417, '北京市'], [853, 442, '天津'], [942, 362, '辽宁'], [982, 298, '吉林'], [1018, 265, '黑龙江'], [820, 480, '河北'], [775, 485, '山西'], [857, 517, '山东'], [798, 583, '河南'], [727, 597, '陕西'], [643, 535, '甘肃'], [683, 480, '宁夏'], [610, 520, '青海'], [855, 660, '安徽'], [878, 663, '江苏'], [915, 683, '上海'], [885, 725, '浙江'], [805, 702, '湖北'], [650, 700, '四川'], [715, 708, '重庆'], [833, 762, '江西'], [787, 773, '湖南'], [690, 817, '贵州'], [633, 857, '云南'], [717, 925, '广西'], [788, 930, '广东'], [885, 842, '福建'], [746, 1022, '海南']];
  places.forEach(([x, y, name]) => add(labels, 'text', { x: X(x), y: Y(y) + 2, class: 'mlabel' }, name));
  [[795, 482, 7], [835, 518, 6], [780, 585, 5], [838, 660, 5]].forEach(([x, y, r]) => {
    add(labels, 'circle', { cx: X(x), cy: Y(y), r: r + 3, class: 'mhalo' });
    add(labels, 'circle', { cx: X(x), cy: Y(y), r: r, class: 'mdot' });
  });
  [[762, 485], [925, 362], [998, 265], [965, 298], [825, 417], [805, 702], [818, 762], [872, 725], [860, 663]].forEach(([x, y]) => add(labels, 'circle', { cx: X(x), cy: Y(y), r: 1.8, class: 'mdot' }));

  const bars = document.getElementById('salesbars');
  add(bars, 'text', { x: 578, y: 42, class: 'bar-title' }, '长春销售额统计情况');
  [0, 50, 100, 150, 200, 250].forEach((v, i) => add(bars, 'text', { x: 575 + i * 30.7, y: 58, class: 'bar-ax' }, v));
  add(bars, 'path', { d: 'M575 60V339', class: 'ax-line' });
  const names = ['河北', '山东', '河南', '安徽', '江苏', '辽宁', '山西', '江西', '吉林', '黑龙江', '湖北', '浙江', '北京市', '上海', '内蒙古', '广东', '福建', '湖南', '天津', '四川', '新疆', '云南', '广西', '重庆', '甘肃', '宁夏', '陕西', '贵州', '青海', '海南'];
  const widths = [297, 271, 197, 196, 126, 105, 67, 63, 62, 51, 47, 40, 34, 27, 14, 14, 12, 9, 8, 3, 2, 1, 1];
  names.forEach((name, i) => {
    const y = 64 + i * 9.3;
    add(bars, 'text', { x: 572, y: y + 2, class: 'bar-lb' }, name);
    if (widths[i]) add(bars, 'rect', { x: 575.5, y: y - 3.7, width: widths[i] / 2.036, height: 7.4, class: 'bar-fg' });
  });
})();

/* Realtime trend */
(function () {
  const svg = document.getElementById('trend');
  const X = z => z / 2.036 - 132;
  const Y = z => z / 3 - 36;
  const ticks = ['2,100', '1,800', '1,500', '1,200', '900', '600', '300', '0'];
  ticks.forEach((label, i) => {
    const z = 162 + i * 37.4;
    add(svg, 'line', { x1: X(333), x2: X(1527), y1: Y(z), y2: Y(z), class: 'trend-g' });
    add(svg, 'text', { x: X(327), y: Y(z) + 3, class: 'trend-ax ax-l' }, label);
  });
  const times = ['13:53:34', '13:53:43', '13:53:53', '13:54:2', '13:54:12', '13:54:22', '13:54:32', '13:54:42', '13:54:53', '13:55:4', '13:55:13', '13:55:23', '13:55:32', '13:55:42'];
  [334, 422, 511, 599, 687, 776, 864, 952, 1041, 1130, 1218, 1307, 1395, 1483].forEach((z, i) => {
    add(svg, 'text', { x: X(z), y: Y(447), class: 'trend-ax ax-c' }, times[i]);
  });
  add(svg, 'line', { x1: X(333), x2: X(333), y1: Y(162), y2: Y(424), class: 'trend-g' });
  const line = [[333, 230], [360, 300], [390, 333], [420, 327], [455, 338], [480, 315], [508, 241], [530, 310], [553, 380], [580, 290], [600, 217], [620, 300], [648, 371], [685, 310], [705, 340], [730, 405], [755, 370], [776, 262], [795, 340], [820, 421], [845, 300], [870, 262], [905, 302], [925, 280], [945, 225], [970, 190], [997, 178], [1010, 220], [1025, 320], [1055, 377], [1095, 340], [1120, 265], [1145, 246], [1185, 270], [1220, 315], [1255, 316], [1285, 390], [1310, 418], [1340, 410], [1365, 380], [1395, 330], [1435, 337], [1470, 250], [1495, 242], [1527, 255]];
  add(svg, 'path', { d: smooth(line.map(p => [X(p[0]), Y(p[1])])), class: 'trend-ln' });
  add(svg, 'rect', { x: X(335), y: Y(475), width: (1531 - 335) / 2.036, height: 12.500, class: 'sl-bg' });
  let shade = `M${X(335)} ${Y(512)}`;
  line.forEach(p => { shade += `L${X(p[0])} ${Y(512 - (424 - p[1]) * 0.11)}`; });
  shade += `L${X(1531)} ${Y(512)}Z`;
  add(svg, 'path', { d: shade, class: 'sl-sh' });
  add(svg, 'rect', { x: X(335), y: Y(475), width: (1531 - 335) / 2.036, height: 12.500, class: 'sl-f' });
  add(svg, 'rect', { x: X(335) - 1, y: Y(486), width: 2.500, height: 5, class: 'sl-h' });
  add(svg, 'rect', { x: X(1531) - 1, y: Y(486), width: 2.500, height: 5, class: 'sl-h' });
})();

/* Calendar heat map */
(function () {
  const svg = document.getElementById('heat');
  const X = z => z / 2.036 - 2;
  const Y = z => z / 3 - 187;
  const zx = z => X(z).toFixed(1);
  const zy = z => Y(z).toFixed(1);
  const step = pts => pts.map((p, i) => (i ? 'L' : 'M') + zx(p[0]) + ' ' + zy(p[1])).join('');
  add(svg, 'path', { d: step([[68, 622], [117, 622], [117, 597], [1532, 597], [1532, 717], [1485, 717], [1485, 766], [68, 766], [68, 622]]), class: 'h-line' });
  const seps = [
    [[305, 597], [305, 660], [258, 660], [258, 766]],
    [[494, 597], [494, 741], [447, 741], [447, 766]],
    [[730, 597], [730, 645], [683, 645], [683, 766]],
    [[919, 597], [919, 693], [872, 693], [872, 766]],
    [[1108, 597], [1108, 766]],
    [[1343, 597], [1343, 645], [1297, 645], [1297, 766]]
  ];
  seps.forEach(s => add(svg, 'path', { d: step(s), class: 'h-line' }));
  [['Jun', 187], ['Jul', 376], ['Aug', 589], ['Sep', 801], ['Oct', 990], ['Nov', 1226], ['Dec', 1414]].forEach(([m, z]) => {
    add(svg, 'text', { x: X(z), y: Y(581) + 3, class: 'h-t' }, m);
  });
  ['S', 'M', 'T', 'W', 'T', 'F', 'S'].forEach((d, i) => add(svg, 'text', { x: X(40), y: Y(609 + i * 24) + 3, class: 'h-t' }, d));
  const weeks = ['-130110', '3035122', '2511211', '1222213', '22-5362', '6112161', '-221101', '2421311', '2-01333', '1-1-103', '2433-24', '331-31-', '1024-30', '4-20411', '23-4221', '15-2-62', '2221-22', '233-114', '31121-3', '31213-2', '1232133', '1312333', '1432214', '014-3-3', '6-11-33', '3122222', '13-2122', '-4-0-12', '323-21-', '2211-22', '11-31--'];
  const radius = [0.6, 1.2, 1.9, 2.7, 3.2, 4.2, 4.8];
  weeks.forEach((week, c) => {
    const cx = X(93 + c * 47.2);
    [...week].forEach((ch, r) => {
      if (ch === '-') return;
      const v = +ch;
      const cy = Y(609 + r * 24);
      if (v >= 5) {
        add(svg, 'circle', { cx, cy, r: radius[v] + 1.6, class: 'h-halo' });
        add(svg, 'circle', { cx, cy, r: radius[v] + 3.2, class: 'h-halo' });
      }
      add(svg, 'circle', { cx, cy, r: radius[v], class: 'h-dot' });
    });
  });
})();
```
